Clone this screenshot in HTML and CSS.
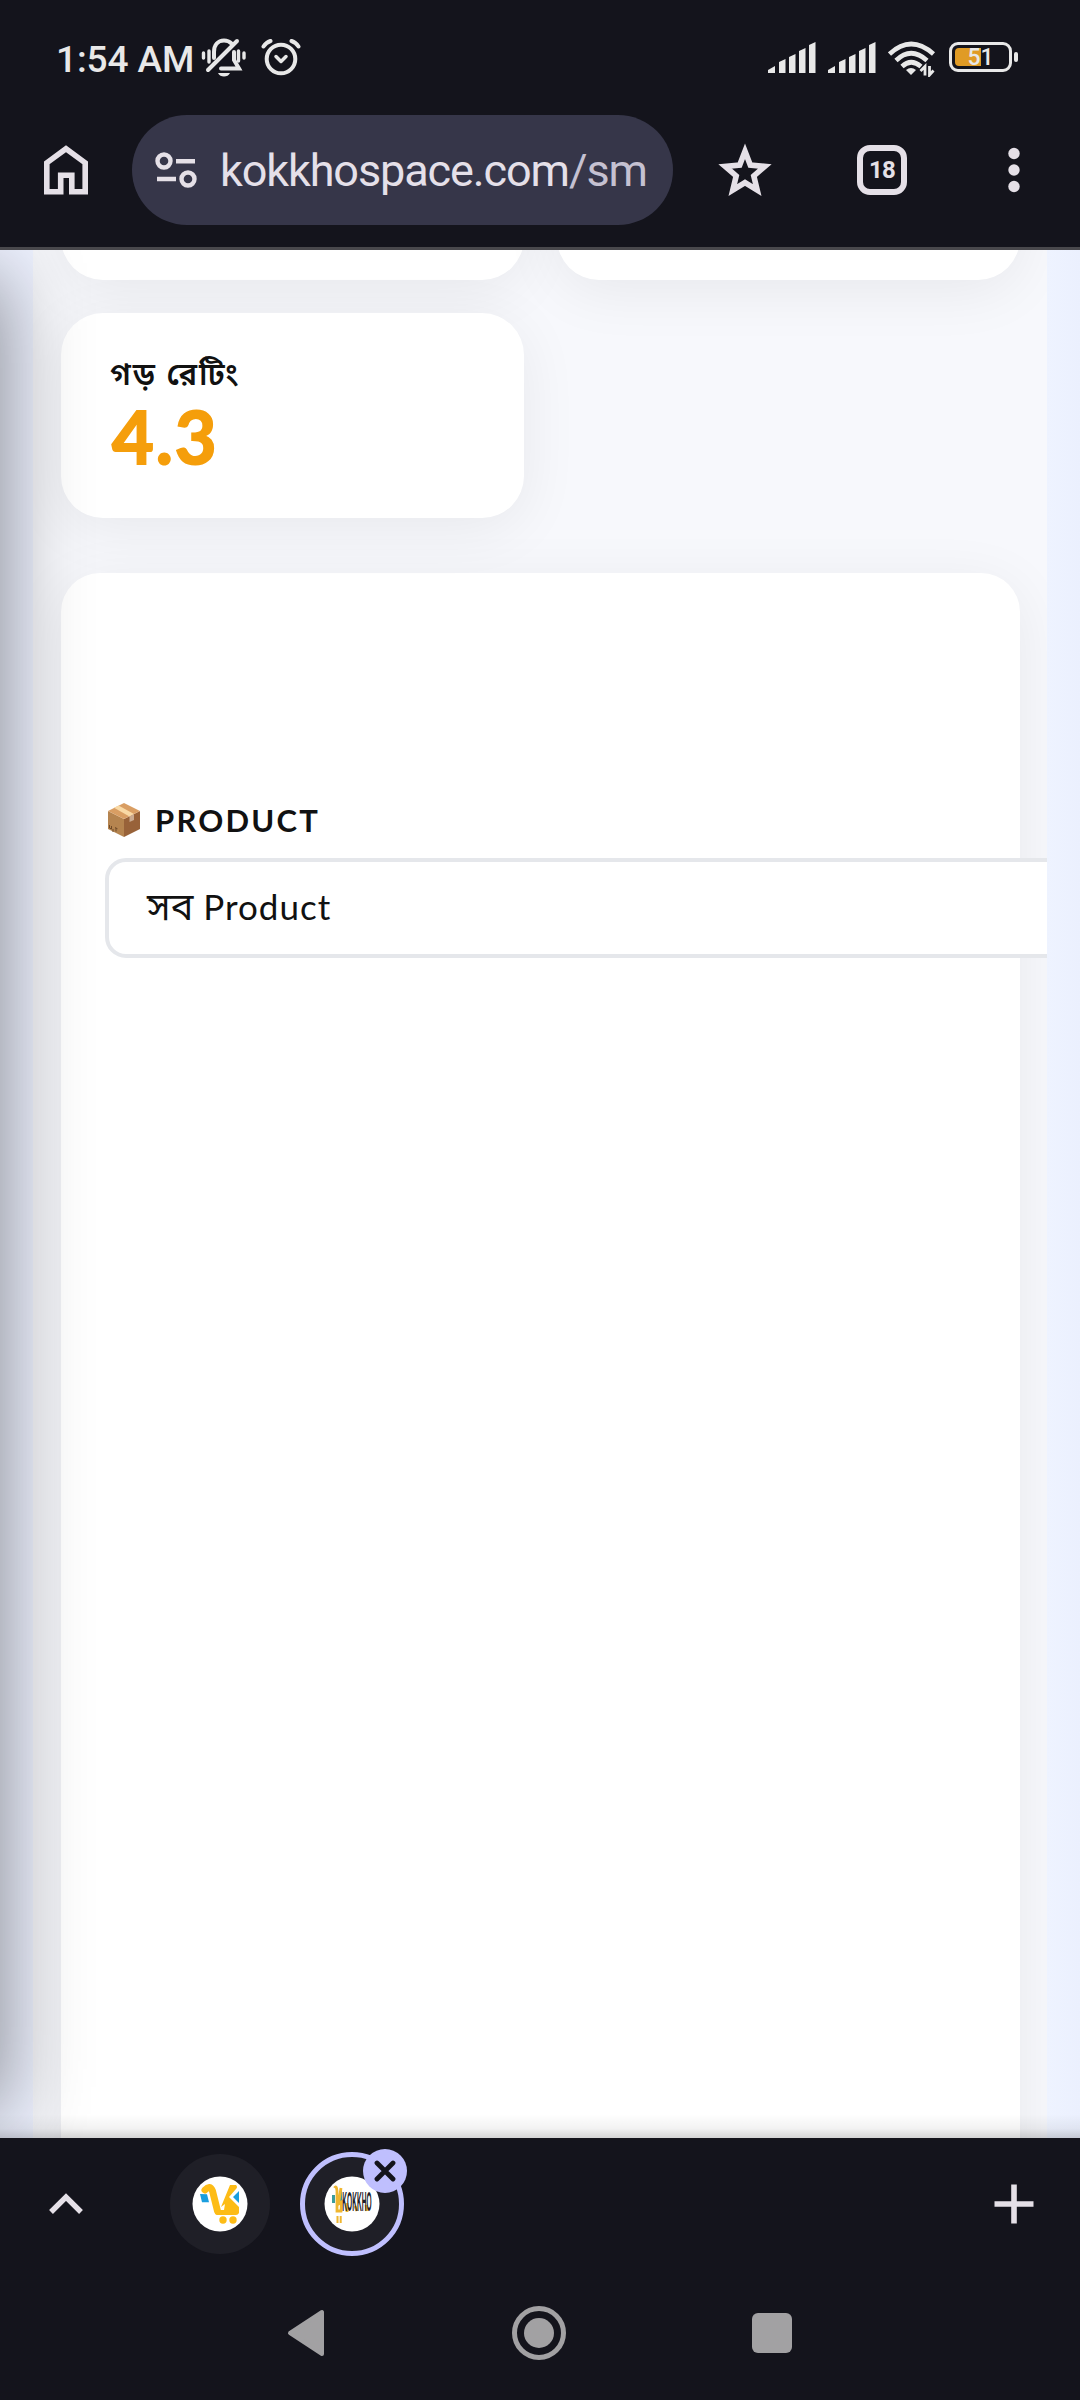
FILE: index.html
```html
<!DOCTYPE html>
<html lang="bn">
<head>
<meta charset="utf-8">
<title>kokkhospace.com</title>
<link rel="stylesheet" href="styles.css">
</head>
<body>
<div class="phone">
  <header class="chrome">
    <div class="status">
      <span class="clock">1:54 AM</span>
      <svg class="bell" width="46" height="40" viewBox="0 0 46 40" fill="none" stroke="#e8e8e8" stroke-width="3.4" stroke-linecap="round">
        <path d="M2.500 15v5M8 13v11M37.500 13v10M43 15v5"/>
        <path d="M13 20V14c0-7 4-11.500 10-11.500 3 0 5.500 1 7.500 3M33 14v8l5 8.500H20" stroke-width="4"/>
        <path d="M7 32 36 3" stroke-width="4"/>
        <path d="M17 35h12c-1 2.300-3.500 3.600-6 3.600s-5-1.300-6-3.600z" fill="#e8e8e8" stroke="none"/>
      </svg>
      <svg class="alarm" width="40" height="38" viewBox="0 0 40 38" fill="none" stroke="#e8e8e8" stroke-width="4" stroke-linecap="round" stroke-linejoin="round">
        <circle cx="20" cy="21" r="14.300"/>
        <path d="m15 18.500 5 5 5-5" stroke-width="3.500"/>
        <path d="M2.500 8.500Q5 4.500 9.500 3M37.500 8.500Q35 4.500 30.500 3"/>
      </svg>
      <div class="radio">
        <svg width="48" height="32" viewBox="0 0 48 32" fill="#e8e8e8"><path d="M0 31v-3l7-4v7zM11 31V20l6.500-3v14zM21 31V15l6.500-3v19zM31 31V9l6.500-3v25zM41 31V3l6.500-3v31z"/></svg>
        <svg width="48" height="32" viewBox="0 0 48 32" fill="#e8e8e8"><path d="M0 31v-3l7-4v7zM11 31V20l6.500-3v14zM21 31V15l6.500-3v19zM31 31V9l6.500-3v25zM41 31V3l6.500-3v31z"/></svg>
        <svg class="wifi" width="48" height="36" viewBox="0 0 48 36" fill="none" stroke="#e8e8e8" stroke-width="4.600">
          <path d="M1.500 13Q23 -7 45.500 13M8 19.500Q23 5 39 19.500M14 25.500Q23 17 33 25.500"/>
          <path d="M18 29q5-4 10 0l-5 5z" fill="#e8e8e8" stroke="none"/>
          <path d="M37 34.500v-9l-4.500 4.500M41.500 25v9l4-4.500" stroke-width="2.800"/>
        </svg>
        <div class="battery"><span class="charge"></span><span class="level">51</span></div>
        <span class="tip"></span>
      </div>
    </div>
    <div class="toolbar">
      <svg class="home" width="44" height="50" viewBox="0 0 44 50" fill="none" stroke="#e5e0e7" stroke-width="5.600"><path d="M2.800 46.700V17.800L22 3.700l19.200 14.100v28.900H27.800V30.300H16.700v16.400z"/></svg>
      <div class="omnibox">
        <svg width="42" height="36" viewBox="0 0 42 36" fill="none" stroke="#e5e0e7" stroke-width="4.400"><circle cx="9" cy="9" r="6.500"/><circle cx="33" cy="27" r="6.500"/><path d="M21 9.300h19M2 27h19"/></svg>
        <div class="url">kokkhospace.com<span>/sm</span></div>
      </div>
      <svg class="star" width="56" height="54" viewBox="0 0 56 54" fill="none" stroke="#e5e0e7" stroke-width="5.600"><path d="m28 8.300 5.300 13.800 14.500 1.300-11 9.500 3.400 14.200L28 39.600l-12.200 7.500 3.400-14.200-11-9.500 14.500-1.300z"/></svg>
      <div class="tabs">18</div>
      <svg class="dots" width="12" height="46" viewBox="0 0 12 46" fill="#e5e0e7"><circle cx="6" cy="6.500" r="5.700"/><circle cx="6" cy="23" r="5.700"/><circle cx="6" cy="39.500" r="5.700"/></svg>
    </div>
  </header>
  <main class="viewport">
    <section class="content">
      <div class="stats">
        <div class="card cut"></div>
        <div class="card cut"></div>
        <div class="card stat">
          <div class="label">গড় রেটিং</div>
          <div class="score">4.3</div>
        </div>
      </div>
      <div class="card panel">
        <div class="field-label">
          <svg width="34" height="36" viewBox="0 0 34 36"><path d="M1 9 17 17v18L1 27z" fill="#b5844f"/><path d="M17 17 33 9v18L17 35z" fill="#986239"/><path d="M17 1 33 9 17 17 1 9z" fill="#d99e63"/><path d="m7 5.800 4.500-2.300L27 12l-4.500 2.400z" fill="#f9d9a5"/><path d="m22.500 14.400 4.500-2.300v6l-4.500 2z" fill="#c9aa90"/><path d="M2.500 23v3l2 1v-3M6 27v3M8 25.500l2.500 1.300M9 26v3.500" fill="none" stroke="#6f4b28"/></svg>
          <span>PRODUCT</span>
        </div>
        <div class="select"><span class="bn">সব</span> Product</div>
      </div>
    </section>
    <div class="drawer"></div>
  </main>
  <footer class="tabstrip">
    <svg class="chevron" width="34" height="22" viewBox="0 0 34 22" fill="none" stroke="#e5e0e7" stroke-width="5.400"><path d="M2 19 17 4l15 15"/></svg>
    <div class="tab">
      <svg width="56" height="56" viewBox="0 0 56 56"><circle cx="28" cy="28" r="27.500" fill="#fff"/><path d="m8 18 7 .3 2 8H10zM47 15v12l-6-6z" fill="#1b9ede"/><path d="M13 14Q18 8.500 20.500 15L25.500 35" fill="none" stroke="#fdbc16" stroke-width="7" stroke-linecap="round"/><path d="M38 9h6q2 2 0 4l-7 8 10 10v6q-1 2-3 2H25q-3-1-2-4l5-1h4l1-6-4 3z" fill="#fdbc16"/><circle cx="31" cy="44" r="3.700" fill="#fdbc16"/><circle cx="41" cy="44" r="3.700" fill="#fdbc16"/></svg>
    </div>
    <div class="tab active">
      <svg width="56" height="56" viewBox="0 0 56 56"><circle cx="28" cy="28" r="27.500" fill="#fff"/><path d="M8 19h3v8H8zM16 15h2v10h-2z" fill="#3b9c9c"/><path d="M10.500 12q2-3 2.500 3v20h4l.5-9-3 2 2.500-16M23 27v9M31 30l2 5M42 29l1 6" fill="none" stroke="#efb62f" stroke-width="2.800"/><path d="M13.500 40v7M16.700 40v7" stroke="#efb62f" stroke-width="2"/><text transform="translate(18.300 35.300) scale(.235 1)" class="brand">KOKKHO</text></svg>
      <span class="close"><svg width="22" height="22" viewBox="0 0 22 22" stroke="#14141c" stroke-width="4.800" stroke-linecap="round"><path d="m3 3 16 16M19 3 3 19"/></svg></span>
    </div>
    <svg class="plus" width="40" height="40" viewBox="0 0 40 40" stroke="#e5e0e7" stroke-width="5.600"><path d="M20 .5v39M.5 20h39"/></svg>
  </footer>
  <nav class="sysnav">
    <svg width="38" height="48" viewBox="0 0 38 48"><path d="M3 24 35 3v42z" fill="#a2a1a3" stroke="#a2a1a3" stroke-width="4" stroke-linejoin="round"/></svg>
    <svg width="54" height="54" viewBox="0 0 54 54"><circle cx="27" cy="27" r="24.500" fill="none" stroke="#a2a1a3" stroke-width="5"/><circle cx="27" cy="27" r="15" fill="#a2a1a3"/></svg>
    <span class="recents"></span>
  </nav>
</div>
</body>
</html>
```
FILE: styles.css
```css
* { box-sizing: border-box; }
body { margin: 0; background: #14141c; }
svg { display: block; flex: none; }
.phone { width: 1080px; height: 2400px; display: flex; flex-direction: column; overflow: hidden; }

.chrome { height: 250px; flex: none; border-bottom: 3px solid #49484c; background: #14141c; }
.status { height: 115px; display: flex; align-items: flex-start; padding: 38px 62px 0 56px; color: #e8e8e8; }
.clock { width: 145px; font: 500 37px/43px Roboto, sans-serif; letter-spacing: -.1px; white-space: nowrap; }
.alarm { margin-left: 14px; }
.radio { margin-left: auto; display: flex; padding-top: 4px; }
.radio svg + svg { margin-left: 12px; }
.radio .wifi { margin: -1px 0 0 12px; }
.battery { position: relative; width: 63px; height: 30px; margin-left: 13px; border: 3px solid #e8e8e8; border-radius: 9px; display: flex; padding: 3px; }
.charge { width: 26px; height: 18px; border-radius: 4px 0 0 4px; background: #e09b25; }
.level { position: absolute; left: 0; right: 0; top: 0; text-align: center; font: 500 23px/26px Roboto, sans-serif; }
.tip { width: 4px; height: 10px; margin: 10px 0 0 2px; border-radius: 2px; background: #e8e8e8; }

.toolbar { display: flex; height: 110px; align-items: center; padding-left: 44px; }
.omnibox { display: flex; align-items: center; width: 541px; height: 110px; margin-left: 44px; padding-left: 23px; border-radius: 55px; background: #363649; }
.url { margin-left: 23px; padding-top: 2px; font: 400 45px/60px Roboto, sans-serif; letter-spacing: -1.100px; color: #e5e0e9; white-space: nowrap; }
.url span { color: #c5c1d1; }
.star { margin-left: 44px; }
.tabs { width: 50px; height: 50px; margin-left: 84px; border: 6px solid #e5e0e7; border-radius: 13px; color: #e5e0e7; text-align: center; font: 700 24px/39px Roboto, sans-serif; letter-spacing: -.8px; }
.dots { margin-left: 101px; }

.viewport { position: relative; height: 1888px; flex: none; overflow: hidden; padding: 0 33px; background: linear-gradient(90deg, #eef2ff 0 1047px, #eef3ff 1047px, #ebf0fe 1080px); }
.viewport::after { content: ""; position: absolute; left: 0; right: 0; bottom: 0; height: 24px; background: linear-gradient(rgba(0,0,0,0), rgba(0,0,0,.05) 60%, rgba(0,0,0,.17)); }
.content { width: 1014px; height: 1888px; padding: 0 27px 0 28px; overflow: hidden; background: #f7f8fc; }
.stats { display: grid; grid-template-columns: 463px 463px; column-gap: 33px; row-gap: 33px; }
.card { background: #fff; border-radius: 42px; box-shadow: 0 11px 60px rgba(0,0,0,.065); }
.cut { height: 150px; margin-top: -120px; }
.stat { height: 205px; padding: 45px 49px 0; }
.label { height: 34px; font: 600 31px/40px "Noto Sans Bengali", "Noto Sans", sans-serif; letter-spacing: 1.800px; color: #111; white-space: nowrap; }
.score { padding-left: 2px; font: 700 72px/88px Lato, sans-serif; letter-spacing: 2px; color: #f59e0b; -webkit-text-stroke: 2px #f59e0b; stroke-linejoin: round; }
.panel { width: 959px; height: 1700px; margin-top: 55px; border-radius: 39px; padding: 229px 44px 0; }
.field-label { display: flex; align-items: center; height: 36px; gap: 14px; font: 700 31px/36px Lato, sans-serif; letter-spacing: 2.200px; color: #111; }
.field-label svg { margin-left: 2px; }
.select { width: 1200px; height: 100px; margin-top: 20px; padding-left: 38px; border: 4px solid #e5e7eb; border-radius: 21px; background: #fff; font: 400 35px/89px Lato, "Noto Sans Bengali", sans-serif; letter-spacing: 1px; color: #111; white-space: nowrap; }
.bn { font-size: 38px; line-height: 1; letter-spacing: 0; }
.drawer { position: absolute; left: -300px; width: 300px; top: 30px; bottom: 28px; box-shadow: 0 0 76px 4px rgba(0,0,0,.43); }

.tabstrip { height: 132px; flex: none; display: flex; align-items: center; padding-left: 49px; }
.tab { position: relative; display: flex; align-items: center; justify-content: center; width: 100px; height: 100px; margin-left: 87px; border-radius: 50%; background: #1f1f27; }
.tab.active { width: 104px; height: 104px; margin-left: 30px; border: 5px solid #bfbffe; }
.brand { font: 700 28px "Liberation Sans", sans-serif; fill: #202024; }
.close { position: absolute; right: -8px; top: -8px; width: 44px; height: 44px; display: flex; align-items: center; justify-content: center; border-radius: 50%; background: #bfbffe; }
.plus { margin-left: 590px; }

.sysnav { height: 130px; flex: none; display: flex; align-items: center; justify-content: space-between; padding: 0 288px 5px 287px; }
.recents { width: 40px; height: 40px; border-radius: 6px; background: #a2a1a3; }
```
